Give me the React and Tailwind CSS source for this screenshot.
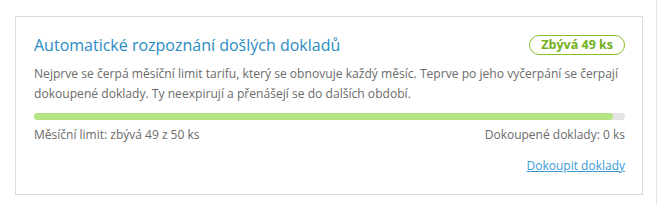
export default function App() {
  return (
    <div className="w-[660px] h-[205px] bg-white flex" style={{ fontFamily: '"Open Sans", sans-serif' }}>
      <div className="w-[656px] pl-[15px] pr-[13px] pt-[16px]">
        <div className="border border-[#dcdcdc] h-[179px] pl-[18px] pr-[17px] pt-[16px]">
          <div className="flex items-center justify-between">
            <h2 className="text-[16px] leading-[24px] text-[#2b8bc2] font-normal">Automatické rozpoznání došlých dokladů</h2>
            <span className="h-[20px] px-[11px] rounded-full border border-[#86bf2a] text-[#72b01d] text-[12.5px] font-bold leading-[18px] flex items-center">Zbývá 49 ks</span>
          </div>
          <p className="mt-[7px] text-[12.1px] leading-[20px] text-[#6b6b6b]">
            Nejprve se čerpá měsíční limit tarifu, který se obnovuje každý měsíc. Teprve po jeho vyčerpání se čerpají dokoupené doklady. Ty neexpirují a přenášejí se do dalších období.
          </p>
          <div className="mt-[9px] h-[7px] rounded-full bg-[#e4e4e4]">
            <div className="h-full rounded-full bg-[#b3e683]" style={{ width: '98%' }} />
          </div>
          <div className="mt-[6px] flex justify-between text-[12px] leading-[18px] text-[#6b6b6b]">
            <span>Měsíční limit: zbývá 49 z 50 ks</span>
            <span>Dokoupené doklady: 0 ks</span>
          </div>
          <div className="mt-[13px] flex justify-end">
            <a href="#" className="text-[12px] leading-[18px] text-[#3a9ad9] underline">Dokoupit doklady</a>
          </div>
        </div>
      </div>
      <div className="w-px h-full bg-[#e8e8e8]" />
    </div>
  );
}
